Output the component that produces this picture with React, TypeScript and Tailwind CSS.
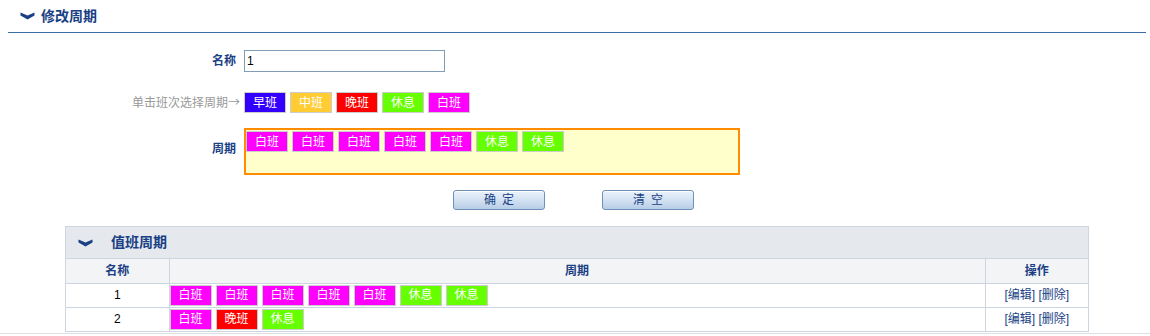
import React from 'react'

const font = { fontFamily: '"Liberation Sans", "Noto Sans CJK SC", sans-serif' }

const shiftColor: Record<string, string> = {
  早班: 'bg-[#3300ff]',
  中班: 'bg-[#ffcc33]',
  晚班: 'bg-[#ff0000]',
  休息: 'bg-[#66ff00]',
  白班: 'bg-[#ff00ff]',
}

const Chip = ({ name }: { name: string }) => (
  <span
    className={`inline-flex items-center justify-center w-[42px] h-[21px] border border-[#cccccc] text-white text-[12px] leading-none ${shiftColor[name]}`}
  >
    {name}
  </span>
)

// thick down chevron used on section headers
const Chevron = () => (
  <svg width="15" height="8" viewBox="0 0 15 8">
    <path d="M0.5 0.5 L7.5 3.5 L14.5 0.5 L14.5 3.5 L7.5 7.5 L0.5 3.5 Z" fill="#1a3f85" />
  </svg>
)

const Btn = ({ label }: { label: string }) => (
  <button className="w-[92px] h-[20px] rounded-[3px] border border-[#6f8fb8] bg-gradient-to-b from-[#eaf2fb] via-[#d3e2f2] to-[#b7cde6] text-[12px] text-[#1a3f85] tracking-[6px] pl-[6px] leading-none shadow-[inset_0_1px_0_#fff]">
    {label}
  </button>
)

const rows = [
  { id: 1, cycle: ['白班', '白班', '白班', '白班', '白班', '休息', '休息'] },
  { id: 2, cycle: ['白班', '晚班', '休息'] },
]

export default function App() {
  return (
    <div className="w-[1150px] h-[336px] bg-white overflow-hidden" style={font}>
      <div className="ml-2 mr-1">
        <div className="h-[33px] flex items-center gap-[6px] pl-[12px] border-b border-[#3a6ea5]">
          <Chevron />
          <span className="text-[14px] font-bold text-[#1a3f85]">修改周期</span>
        </div>

        <div className="flex items-center mt-[17px]">
          <div className="w-[228px] mr-2 text-right text-[12px] font-bold text-[#1a3f85]">名称</div>
          <div className="w-[201px] h-[22px] border border-[#7f9db9] flex items-center px-[2px] text-[12px] text-[#000]">1</div>
        </div>

        <div className="flex items-center mt-[20px]">
          <div className="w-[232px] mr-1 text-right text-[12px] text-[#999999]">
            单击班次选择周期
            <span style={{ fontFamily: '"Noto Sans CJK SC", sans-serif' }}>→</span>
          </div>
          <div className="flex gap-[4px]">
            {['早班', '中班', '晚班', '休息', '白班'].map((s) => (
              <Chip key={s} name={s} />
            ))}
          </div>
        </div>

        <div className="flex items-center mt-[15px]">
          <div className="w-[228px] mr-2 text-right text-[12px] font-bold text-[#1a3f85] -mt-[6px]">周期</div>
          <div className="w-[496px] h-[47px] border-2 border-[#ff8c00] bg-[#ffffcc] pt-[1px] flex items-start gap-[4px]">
            {['白班', '白班', '白班', '白班', '白班', '休息', '休息'].map((s, i) => (
              <Chip key={i} name={s} />
            ))}
          </div>
        </div>

        <div className="flex mt-[15px] ml-[445px] gap-[57px]">
          <Btn label="确定" />
          <Btn label="清空" />
        </div>

        <div className="w-[1024px] mx-auto mt-[16px] border border-[#ccd5e0]">
          <div className="h-[32px] bg-[#e5e9ee] flex items-center gap-[18px] pl-[12px] border-b border-[#ccd5e0]">
            <Chevron />
            <span className="text-[14px] font-bold text-[#1a3f85]">值班周期</span>
          </div>
          <table className="w-full border-collapse text-[12px]">
            <thead>
              <tr className="h-[24px] bg-[#f3f4f5] text-[#1a3f85] font-bold">
                <th className="w-[103px] border-r border-b border-[#ccd5e0]">名称</th>
                <th className="border-r border-b border-[#ccd5e0]">周期</th>
                <th className="w-[103px] border-b border-[#ccd5e0]">操作</th>
              </tr>
            </thead>
            <tbody>
              {rows.map((r, idx) => (
                <tr key={r.id} className="h-[24px]">
                  <td className={`text-center text-[#000] border-r border-[#ccd5e0] ${idx === 0 ? 'border-b' : ''}`}>{r.id}</td>
                  <td className={`pl-0 border-r border-[#ccd5e0] ${idx === 0 ? 'border-b' : ''}`}>
                    <div className="flex gap-[4px]">
                      {r.cycle.map((s, i) => (
                        <Chip key={i} name={s} />
                      ))}
                    </div>
                  </td>
                  <td className={`text-center text-[#1a3f85] border-[#ccd5e0] ${idx === 0 ? 'border-b' : ''}`}>
                    [编辑] [删除]
                  </td>
                </tr>
              ))}
            </tbody>
          </table>
        </div>
      </div>
      <div className="mt-[1px] border-t border-[#dcdfe3]" />
    </div>
  )
}
